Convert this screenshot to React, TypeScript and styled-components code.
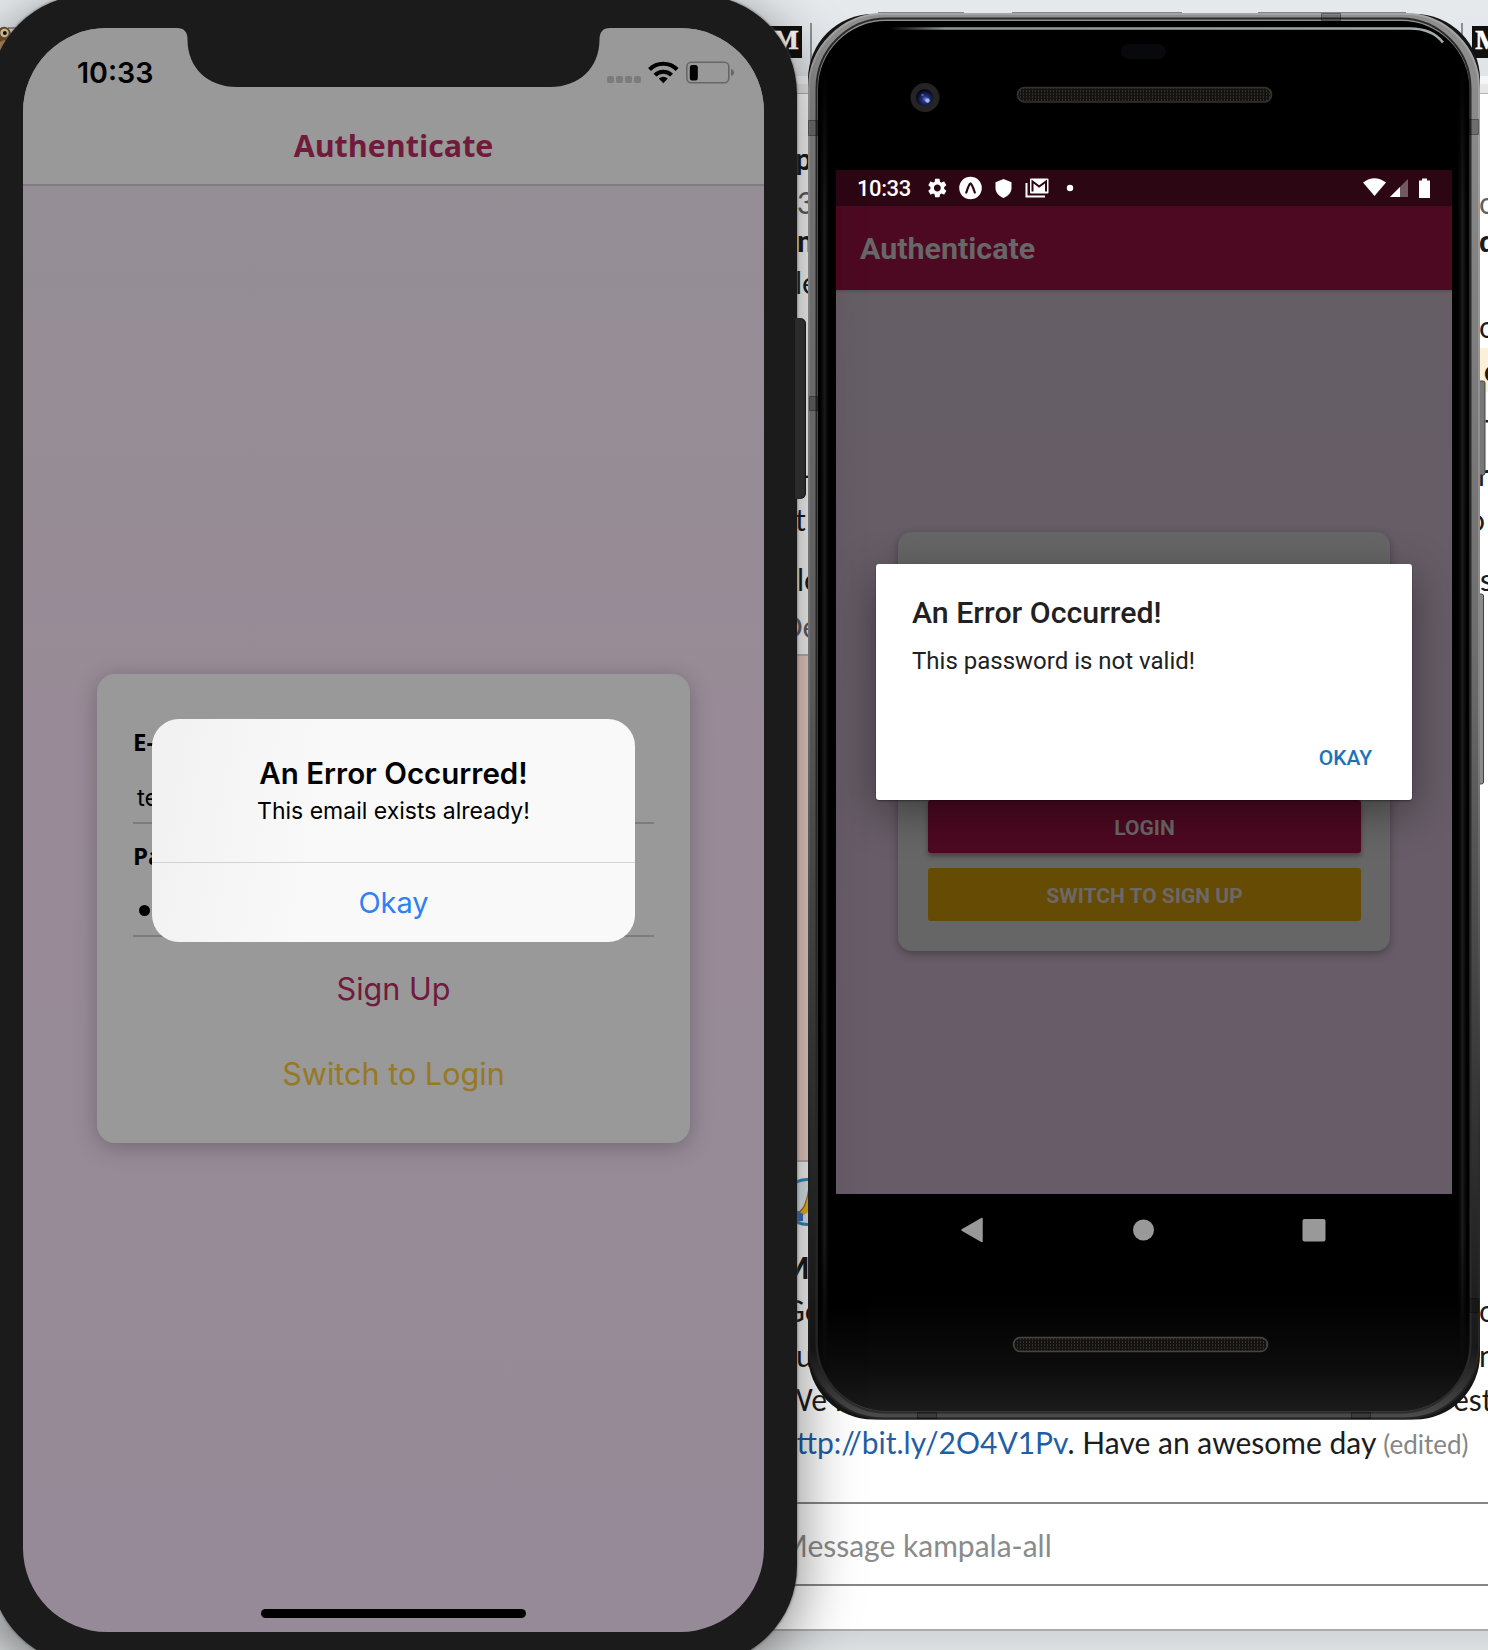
import React from "react";
import styled, { createGlobalStyle } from "styled-components";

const GlobalStyle = createGlobalStyle`
  * { box-sizing: border-box; }
  html, body { margin: 0; padding: 0; overflow: hidden; }
  body { font-family: "Lato", "Open Sans", sans-serif; }
`;

const SF = `"Inter", "Liberation Sans", sans-serif`;
const OPEN = `"Open Sans", "Noto Sans", sans-serif`;
const DROID = `"Roboto", "Noto Sans", sans-serif`;
const CHAT = `"Lato", "Open Sans", sans-serif`;

/* ---------- desktop ---------- */

const Desktop = styled.main`
  position: relative;
  width: 1488px;
  height: 1650px;
  overflow: hidden;
  background: linear-gradient(#e6eaed 0, #dfe4e8 76px, #dfe4e8 1600px, #d2d5d8 1631px, #dcdfe0 1650px);
`;

const BookmarkBar = styled.div`
  display: flex;
  align-items: flex-start;
  height: 76px;
  padding-top: 26px;
`;

const Owl = styled.svg`
  flex: none;
  width: 40px;
  height: 34px;
  margin-right: 730px;
`;

const Medium = styled.span`
  flex: none;
  width: 32px;
  height: 32px;
  background: #11100e;
  color: #fff;
  font: 700 27px/29px "Liberation Serif", serif;
  -webkit-text-stroke: 0.6px #fff;
  text-align: center;
`;

const Divider = styled.span<{ $before: number; $after: number }>`
  flex: none;
  width: 2px;
  height: 40px;
  margin: -3px ${(p) => p.$after}px 0 ${(p) => p.$before}px;
  background: #8c9093;
`;

/* ---------- chat window ---------- */

const ChatWindow = styled.section`
  display: flex;
  flex-direction: column;
  height: 1555px;
  margin-left: 770px;
  width: 718px;
  background: #fff;
  border-top: 8px solid #f6f4f5;
  border-bottom: 2px solid #a9abad;
  font-family: ${CHAT};
  font-size: 30px;
  line-height: 44px;
  color: #1d1c1d;
`;

const ChatStrip = styled.div`
  flex: none;
  height: 10px;
  background: #e6e7e9;
  border-bottom: 1px solid #b4b5b7;
`;

const Row = styled.div<{ $h: number }>`
  flex: none;
  display: flex;
  align-items: flex-end;
  height: ${(p) => p.$h}px;
  white-space: nowrap;
`;

const Lead = styled.span<{ $x: number; $bold?: boolean; $grey?: boolean }>`
  flex: 1;
  padding-left: ${(p) => p.$x}px;
  font-weight: ${(p) => (p.$bold ? 900 : 400)};
  color: ${(p) => (p.$grey ? "#616061" : "inherit")};
`;

const Tail = styled.span<{ $w: number; $bold?: boolean; $grey?: boolean; $mark?: boolean }>`
  flex: none;
  width: ${(p) => p.$w}px;
  padding-left: ${(p) => (p.$mark ? 4 : 0)}px;
  font-weight: ${(p) => (p.$bold ? 900 : 400)};
  color: ${(p) => (p.$grey ? "#616061" : "inherit")};
  background: ${(p) => (p.$mark ? "#fbf1d8" : "none")};
`;

const Attachment = styled.div`
  flex: none;
  height: 508px;
  margin-top: 6px;
  width: 400px;
  background: #eed3ca;
  border: 2px solid #c5b3b0;
`;

const Reaction = styled.div`
  flex: none;
  display: flex;
  align-items: center;
  width: 84px;
  height: 48px;
  margin: 16px 0 17px 13px;
  padding-left: 10px;
  border: 3px solid #2e8cc4;
  border-radius: 24px;
  background: #e2edf5;
`;

const LinkText = styled.span`
  color: #1f5fa6;
`;

const Edited = styled.span`
  margin-left: 7px;
  font-size: 26px;
  color: #868686;
`;

const Composer = styled.div`
  flex: none;
  height: 84px;
  margin-top: 36px;
  padding: 19px 0 0 10px;
  border-top: 2px solid #868686;
  border-bottom: 2px solid #868686;
  color: #8b8b8b;
`;

/* ---------- Android device ---------- */

const AndroidDevice = styled.section`
  position: absolute;
  left: 806px;
  top: 10px;
  width: 682px;
  height: 1414px;
  padding: 160px 0 0 30px;
`;

const Chassis = styled.svg`
  position: absolute;
  left: 0;
  top: 0;
`;

const DroidScreen = styled.div`
  position: relative;
  display: flex;
  flex-direction: column;
  width: 616px;
  height: 1024px;
  background: linear-gradient(#655f65, #665c66 45%, #695c69);
  font-family: ${DROID};
`;

const DroidStatus = styled.div`
  display: flex;
  align-items: center;
  height: 36px;
  padding: 0 21px 0 21px;
  background: #2d0614;
  color: #fff;
`;

const DroidClock = styled.span`
  width: 70px;
  padding-top: 1px;
  font-size: 22px;
  font-weight: 500;
  letter-spacing: -0.4px;
`;

const DroidBar = styled.div`
  height: 84px;
  padding: 23px 0 0 24px;
  background: #4d0922;
  color: #686768;
  font-size: 30.4px;
  font-weight: 700;
  line-height: 40px;
  box-shadow: 0 1px 3px rgba(0, 0, 0, 0.2);
`;

const Center = styled.div`
  flex: 1;
  display: flex;
  align-items: center;
  justify-content: center;
`;

const DroidCard = styled.div`
  display: flex;
  flex-direction: column;
  justify-content: flex-end;
  gap: 15px;
  width: 492px;
  height: 419px;
  margin-top: -1px;
  padding: 30px 29px 30px 30px;
  border-radius: 14px;
  background: #666;
  box-shadow: 0 3px 8px rgba(0, 0, 0, 0.3);
`;

const DroidButton = styled.div<{ $tone: string; $raised?: boolean }>`
  height: 53px;
  border-radius: 3px;
  background: ${(p) => p.$tone};
  color: #6c6867;
  text-align: center;
  font-size: 21px;
  font-weight: 700;
  line-height: 56px;
  box-shadow: ${(p) => (p.$raised ? "0 3px 5px rgba(0,0,0,0.35)" : "none")};
`;

const DroidDialog = styled.div`
  position: absolute;
  left: 40px;
  top: 394px;
  display: flex;
  flex-direction: column;
  width: 536px;
  height: 236px;
  padding: 29px 40px 21px 36px;
  border-radius: 3px;
  background: #fff;
  color: #212121;
  box-shadow: 0 12px 44px rgba(0, 0, 0, 0.4), 0 1px 2px rgba(0, 0, 0, 0.4);
`;

const DroidTitle = styled.h2`
  margin: 0;
  font-size: 30.3px;
  font-weight: 500;
  line-height: 40px;
`;

const DroidMessage = styled.p`
  margin: 12px 0 0;
  font-size: 24px;
  line-height: 32px;
`;

const DroidAction = styled.span`
  align-self: flex-end;
  margin-top: auto;
  color: #1a73b7;
  font-size: 21px;
  font-weight: 500;
  line-height: 42px;
`;

const NavKeys = styled.svg`
  position: relative;
  display: block;
  width: 616px;
  height: 72px;
`;

/* ---------- iPhone ---------- */

const Phone = styled.section`
  position: absolute;
  left: -10px;
  top: -5px;
  width: 807px;
  height: 1670px;
  padding: 33px;
  border-radius: 99px;
  background: #1b1b1b;
  box-shadow: 0 14px 60px rgba(0, 0, 0, 0.5), 0 0 2px 1px rgba(120, 120, 120, 0.5);
`;

const SideKey = styled.div`
  position: absolute;
  left: 805px;
  top: 323px;
  width: 11px;
  height: 181px;
  border-radius: 0 6px 6px 0;
  background: #2b2b2b;
  box-shadow: inset -1px 0 1px #181818;
`;

const PhoneScreen = styled.div`
  position: relative;
  display: flex;
  flex-direction: column;
  width: 741px;
  height: 1604px;
  overflow: hidden;
  border-radius: 84px;
  background: linear-gradient(#958e95 10%, #988b97 45%, #968a98);
  font-family: ${SF};
`;

const Notch = styled.svg`
  position: absolute;
  left: 154px;
  top: -1px;
`;

const PhoneHeader = styled.header`
  display: flex;
  flex-direction: column;
  height: 158px;
  background: #999;
  border-bottom: 2px solid #7f7d83;
`;

const PhoneStatus = styled.div`
  display: flex;
  justify-content: space-between;
  align-items: flex-start;
  padding: 29px 30px 0 54px;
  height: 98px;
`;

const PhoneClock = styled.span`
  padding-top: 1px;
  font-size: 28.6px;
  font-weight: 600;
  line-height: 30px;
  color: #000;
`;

const PhoneTitle = styled.h1`
  margin: 0;
  text-align: center;
  font-family: ${OPEN};
  font-size: 30.4px;
  font-weight: 700;
  line-height: 40px;
  color: #701a3c;
`;

const Card = styled.div`
  display: flex;
  flex-direction: column;
  width: 593px;
  height: 469px;
  margin-top: -1px;
  padding: 52px 36px 0;
  border-radius: 18px;
  background: #999;
  box-shadow: 0 4px 22px rgba(0, 0, 0, 0.25);
`;

const Label = styled.span<{ $gap?: number }>`
  margin-top: ${(p) => p.$gap ?? 0}px;
  font-family: ${OPEN};
  font-size: 24px;
  font-weight: 700;
  line-height: 32px;
`;

const Field = styled.div<{ $h: number }>`
  height: ${(p) => p.$h}px;
  padding: 15px 4px 0;
  border-bottom: 2px solid #7c7c7c;
  font-family: ${SF};
  font-size: 24px;
  line-height: 50px;
`;

const Bullet = styled.i`
  display: block;
  width: 11px;
  height: 11px;
  margin: 18px 0 0 2px;
  border-radius: 50%;
  background: #000;
`;

const TextButton = styled.div<{ $tone: string; $gap: number }>`
  margin-top: ${(p) => p.$gap}px;
  color: ${(p) => p.$tone};
  text-align: center;
  font-size: 30.6px;
  line-height: 40px;
`;

const Alert = styled.div`
  position: absolute;
  left: 129px;
  top: 691px;
  display: flex;
  flex-direction: column;
  width: 483px;
  height: 223px;
  border-radius: 27px;
  background: linear-gradient(100deg, #f1f1f1, #f9f9f9 36%);
  text-align: center;
  color: #000;
`;

const AlertBody = styled.div`
  height: 144px;
  padding-top: 37px;
  border-bottom: 1px solid #d2d3d4;
`;

const AlertTitle = styled.h2`
  margin: 0;
  font-size: 29.5px;
  font-weight: 600;
  line-height: 34px;
`;

const AlertMessage = styled.p`
  margin: 7px 0 0;
  font-size: 23px;
  line-height: 29px;
`;

const AlertAction = styled.div`
  color: #2f80f6;
  font-size: 29px;
  line-height: 79px;
`;

const HomeIndicator = styled.div`
  align-self: center;
  width: 265px;
  height: 9px;
  margin: -23px 0 14px;
  border-radius: 5px;
  background: #000;
`;

function ChatPane() {
  return (
    <ChatWindow>
      <ChatStrip />
      <Row $h={86}><Lead $x={25} $bold>p</Lead></Row>
      <Row $h={44}><Lead $x={27} $grey>3</Lead><Tail $w={9} $grey>o</Tail></Row>
      <Row $h={38}><Lead $x={27} $bold>m</Lead><Tail $w={9} $bold>d</Tail></Row>
      <Row $h={42}><Lead $x={25}>le</Lead></Row>
      <Row $h={44}><Lead $x={25} /><Tail $w={9}>o</Tail></Row>
      <Row $h={44}><Lead $x={25} /><Tail $w={8} $bold $mark>e</Tail></Row>
      <Row $h={60}><Lead $x={25} /><Tail $w={3}>T</Tail></Row>
      <Row $h={44}><Lead $x={33}>-</Lead><Tail $w={10}>r</Tail></Row>
      <Row $h={45}><Lead $x={25}>t</Lead><Tail $w={20}>o</Tail></Row>
      <Row $h={60}><Lead $x={27}>le</Lead><Tail $w={8}>s</Tail></Row>
      <Row $h={47}><Lead $x={10} $grey>De</Lead></Row>
      <Attachment />
      <Reaction>
        <svg width="34" height="40" viewBox="0 0 34 40">
          <path d="M14 3q5 3 3 12l-3 14-11 7-2-5q8-5 9-14z" fill="#efb52c" />
          <path d="M13 4q-1 10-3 15-2 9-9 12" fill="none" stroke="#a87312" strokeWidth="1.200" />
          <path d="M-2 27l9 5v7h-9z" fill="#3d74c9" />
        </svg>
      </Reaction>
      <Row $h={46}><Lead $x={11} $bold>M</Lead></Row>
      <Row $h={43}><Lead $x={13}>Go</Lead><Tail $w={9}>o</Tail></Row>
      <Row $h={45}><Lead $x={26}>u</Lead><Tail $w={9}>n</Tail></Row>
      <Row $h={44}><Lead $x={12}>We h</Lead><Tail $w={35}>est</Tail></Row>
      <Row $h={45}>
        <Lead $x={10}>
          <LinkText>http://bit.ly/2O4V1Pv</LinkText>. Have an awesome day
          <Edited>(edited)</Edited>
        </Lead>
      </Row>
      <Composer>Message kampala-all</Composer>
    </ChatWindow>
  );
}

function AndroidChassis() {
  return (
    <Chassis width="682" height="1414" viewBox="806 10 682 1414">
      <defs>
        <linearGradient id="rim" x1="0" y1="0" x2="0" y2="1">
          <stop offset="0" stopColor="#8f8f8f" />
          <stop offset="0.45" stopColor="#6e6e6e" />
          <stop offset="0.75" stopColor="#3a3a3a" />
          <stop offset="0.95" stopColor="#181818" />
          <stop offset="1" stopColor="#4c4c4c" />
        </linearGradient>
        <linearGradient id="rimEdge" x1="0" y1="0" x2="0" y2="1">
          <stop offset="0" stopColor="#a4a4a4" />
          <stop offset="0.5" stopColor="#828282" />
          <stop offset="0.8" stopColor="#2c2c2c" />
          <stop offset="1" stopColor="#222" />
        </linearGradient>
        <linearGradient id="chin" x1="0" y1="0" x2="0" y2="1">
          <stop offset="0.92" stopColor="#000" />
          <stop offset="0.97" stopColor="#0d0d0d" />
          <stop offset="1" stopColor="#1b1b1b" />
        </linearGradient>
        <linearGradient id="gloss">
          <stop offset="0" stopColor="#8d9799" stopOpacity="0" />
          <stop offset="0.1" stopColor="#8d9799" />
          <stop offset="1" stopColor="#a3adaf" />
        </linearGradient>
        <linearGradient id="sideGloss">
          <stop offset="0" stopColor="#161616" stopOpacity="0" />
          <stop offset="0.5" stopColor="#1c1c1c" />
          <stop offset="1" stopColor="#161616" stopOpacity="0" />
        </linearGradient>
        <linearGradient id="sideFade" x1="0" y1="0" x2="0" y2="1">
          <stop offset="0" stopColor="#000" />
          <stop offset="0.12" stopColor="#fff" />
          <stop offset="0.9" stopColor="#fff" />
          <stop offset="1" stopColor="#000" />
        </linearGradient>
        <mask id="sideMask" maskUnits="userSpaceOnUse" x="806" y="60" width="682" height="1310">
          <rect x="806" y="60" width="682" height="1310" fill="url(#sideFade)" />
        </mask>
        <pattern id="mesh" width="3" height="3" patternUnits="userSpaceOnUse">
          <rect width="3" height="3" fill="#15130f" />
          <rect width="1" height="2" fill="#332f28" />
        </pattern>
        <radialGradient id="lens" cx="0.55" cy="0.6">
          <stop offset="0" stopColor="#6c82e0" />
          <stop offset="0.35" stopColor="#24347f" />
          <stop offset="1" stopColor="#080a1c" />
        </radialGradient>
      </defs>
      <rect x="1476" y="381" width="9" height="94" rx="2" fill="#777" stroke="#444" />
      <rect x="1477" y="594" width="6.500" height="190" rx="2" fill="#8b8b8b" stroke="#444" />
      <rect x="808" y="14" width="672" height="1405.500" rx="65" fill="#151515" />
      <rect x="809" y="14" width="670" height="1404.500" rx="74" fill="url(#rim)" stroke="url(#rimEdge)" strokeWidth="2" />
      <path d="M878 12.500h86M1012 12.500h170M1258 12.500h148" stroke="#858585" />
      <rect x="816.500" y="18.500" width="654" height="1394" rx="70" fill="none" stroke="#2b2b2b" strokeWidth="2" />
      <rect x="818" y="21" width="651.500" height="1390" rx="68" fill="url(#chin)" />
      <g mask="url(#sideMask)">
        <rect x="820" y="60" width="9" height="1310" fill="url(#sideGloss)" />
        <rect x="1458" y="60" width="9" height="1310" fill="url(#sideGloss)" />
      </g>
      <path d="M890 28.500h520q22 0 33 14" fill="none" stroke="url(#gloss)" strokeWidth="2.500" />
      <g fill="#000" fillOpacity="0.2" stroke="#000" strokeOpacity="0.35">
        <rect x="808.500" y="120.500" width="9" height="15" />
        <rect x="809.500" y="396.500" width="8" height="14" />
        <rect x="1469.500" y="119.500" width="9" height="15" />
        <rect x="1469.500" y="1298.500" width="9" height="14" />
        <rect x="1321.500" y="13.500" width="19" height="7" />
        <rect x="917.500" y="1412.500" width="19" height="6" />
        <rect x="1351.500" y="1412.500" width="19" height="6" />
      </g>
      <rect x="1121" y="44" width="45" height="15" rx="7.500" fill="#08090d" />
      <circle cx="925" cy="97.500" r="14.500" fill="#252323" />
      <circle cx="924.500" cy="97.500" r="8.500" fill="url(#lens)" />
      <circle cx="927.500" cy="100.500" r="2.200" fill="#a5b6f5" />
      <circle cx="922.500" cy="95" r="1.300" fill="#4460c4" />
      <rect x="1017.500" y="87.500" width="254" height="14.500" rx="7.200" fill="url(#mesh)" stroke="#333332" strokeWidth="1.600" />
      <rect x="1013.500" y="1337.500" width="254" height="14" rx="7" fill="url(#mesh)" stroke="#444" strokeWidth="1.600" />
    </Chassis>
  );
}

function AndroidStatusIcons() {
  return (
    <>
      <svg width="150" height="28" viewBox="0 0 150 28" fill="#fff">
        <g transform="translate(-1.200 2.500) scale(.96)">
          <path d="M19.140 12.940c.04-.3.06-.61.06-.94 0-.32-.02-.64-.07-.94l2.030-1.580c.18-.14.23-.41.12-.61l-1.920-3.320c-.12-.22-.37-.29-.59-.22l-2.390.96c-.5-.38-1.030-.7-1.620-.94l-.36-2.540c-.04-.24-.24-.41-.48-.41h-3.840c-.24 0-.43.17-.47.41l-.36 2.540c-.59.24-1.130.57-1.620.94l-2.390-.96c-.22-.08-.47 0-.59.22L2.740 8.870c-.12.21-.08.47.12.61l2.030 1.580c-.05.3-.09.63-.09.94s.02.64.07.94l-2.030 1.580c-.18.14-.23.41-.12.61l1.920 3.320c.12.22.37.29.59.22l2.390-.96c.5.38 1.030.7 1.620.94l.36 2.540c.05.24.24.41.48.41h3.840c.24 0 .44-.17.47-.41l.36-2.540c.59-.24 1.130-.56 1.620-.94l2.390.96c.22.08.47 0 .59-.22l1.920-3.320c.12-.22.07-.47-.12-.61l-2.010-1.580zM12 15.600c-1.980 0-3.600-1.620-3.600-3.600s1.620-3.600 3.600-3.600 3.600 1.620 3.600 3.600-1.620 3.600-3.600 3.600z" />
        </g>
        <circle cx="43.500" cy="14" r="11.300" />
        <path d="M39.300 18.500Q42 10 43.500 9.500Q45 10 47.800 18.500" fill="none" stroke="#2d0614" strokeWidth="2.300" strokeLinecap="round" />
        <path d="M76.500 5l8 3.200v5.800c0 4.600-3.400 8-8 10-4.600-2-8-5.400-8-10V8.200z" />
        <path d="M99.500 9v13.500h18.500" fill="none" stroke="#fff" strokeWidth="2" />
        <rect x="103" y="4.500" width="18.500" height="15" rx="1" />
        <path d="M105.500 17.500V7.500l6.700 5 6.800-5v10" fill="none" stroke="#2d0614" strokeWidth="2" />
        <circle cx="143" cy="14" r="3.200" />
      </svg>
      <svg width="68" height="28" viewBox="0 0 68 28" fill="#fff" style={{ marginLeft: "auto" }}>
        <path d="M0 8.500q11.500-8.500 23 0L11.500 22z" />
        <path d="M45 5v18H27z" fillOpacity="0.33" />
        <path d="M37 13v10H27z" />
        <path d="M56 6.500h3V4.500h5V6.500h3V24H56z" />
      </svg>
    </>
  );
}

function Android() {
  return (
    <AndroidDevice>
      <AndroidChassis />
      <DroidScreen>
        <DroidStatus>
          <DroidClock>10:33</DroidClock>
          <AndroidStatusIcons />
        </DroidStatus>
        <DroidBar>Authenticate</DroidBar>
        <Center>
          <DroidCard>
            <DroidButton $tone="#4d0922" $raised>LOGIN</DroidButton>
            <DroidButton $tone="#664b04">SWITCH TO SIGN UP</DroidButton>
          </DroidCard>
        </Center>
        <DroidDialog>
          <DroidTitle>An Error Occurred!</DroidTitle>
          <DroidMessage>This password is not valid!</DroidMessage>
          <DroidAction>OKAY</DroidAction>
        </DroidDialog>
      </DroidScreen>
      <NavKeys viewBox="0 0 616 72" fill="#999">
        <path d="M126 36L146 24.500V47.500z" stroke="#999" strokeWidth="1.500" strokeLinejoin="round" />
        <circle cx="307.500" cy="36" r="10.500" />
        <rect x="466.500" y="25" width="23" height="22.500" rx="2" />
      </NavKeys>
    </AndroidDevice>
  );
}

function PhoneStatusIcons() {
  return (
    <svg width="127" height="30" viewBox="0 0 127 30">
      <g fill="#7b7b7b">
        <rect x="0" y="19" width="7" height="7" rx="2" />
        <rect x="9" y="19" width="7" height="7" rx="2" />
        <rect x="18" y="19" width="7" height="7" rx="2" />
        <rect x="27" y="19" width="7" height="7" rx="2" />
      </g>
      <g fill="none" stroke="#000" strokeWidth="4">
        <path d="M42.500 12.500a19.500 19.500 0 0 1 27.600 0" />
        <path d="M48 18.200a11.800 11.800 0 0 1 16.600 0" />
      </g>
      <path d="M51.800 21.600q4.500-3.600 9 0l-4.500 4.700z" />
      <rect x="79.800" y="5.300" width="42" height="20.500" rx="4.500" fill="none" stroke="#676767" strokeWidth="1.600" />
      <rect x="82.800" y="8" width="8" height="15.500" rx="2.500" />
      <path d="M124 12q3 1 3 3.500t-3 3.500z" fill="#676767" />
    </svg>
  );
}

function IPhone() {
  return (
    <Phone>
      <SideKey />
      <PhoneScreen>
        <PhoneHeader>
          <PhoneStatus>
            <PhoneClock>10:33</PhoneClock>
            <PhoneStatusIcons />
          </PhoneStatus>
          <PhoneTitle>Authenticate</PhoneTitle>
        </PhoneHeader>
        <Center>
          <Card>
            <Label>E-Mail</Label>
            <Field $h={66}>test</Field>
            <Label $gap={16}>Password</Label>
            <Field $h={65}>
              <Bullet />
            </Field>
            <TextButton $tone="#701a3c" $gap={32}>Sign Up</TextButton>
            <TextButton $tone="#977823" $gap={45}>Switch to Login</TextButton>
          </Card>
        </Center>
        <HomeIndicator />
        <Notch width="433" height="61" viewBox="0 0 433 61">
          <path d="M0 0H433V1Q422.500 1 422.500 12.500C422.500 41 402 60 373 60H60C31 60 10.500 41 10.500 12.500Q10.500 1 0 1z" fill="#1b1b1b" />
        </Notch>
        <Alert>
          <AlertBody>
            <AlertTitle>An Error Occurred!</AlertTitle>
            <AlertMessage>This email exists already!</AlertMessage>
          </AlertBody>
          <AlertAction>Okay</AlertAction>
        </Alert>
      </PhoneScreen>
    </Phone>
  );
}

export default function App() {
  return (
    <Desktop>
      <GlobalStyle />
      <BookmarkBar>
        <Owl viewBox="0 0 40 34">
          <path d="M0 2q8-4 11 5 3 12-7 20H0z" fill="#76512f" />
          <path d="M4 14q6 2 5 8l-5 4H0V16z" fill="#b98a55" />
          <circle cx="4.500" cy="7" r="4.200" fill="#e8d3ab" />
          <circle cx="4.800" cy="7" r="2" fill="#17110c" />
          <path d="M8 2h8" stroke="#60422a" />
        </Owl>
        <Medium>M</Medium>
        <Divider $before={8} $after={649} />
        <Divider $before={0} $after={9} />
        <Medium>M</Medium>
      </BookmarkBar>
      <ChatPane />
      <Android />
      <IPhone />
    </Desktop>
  );
}
